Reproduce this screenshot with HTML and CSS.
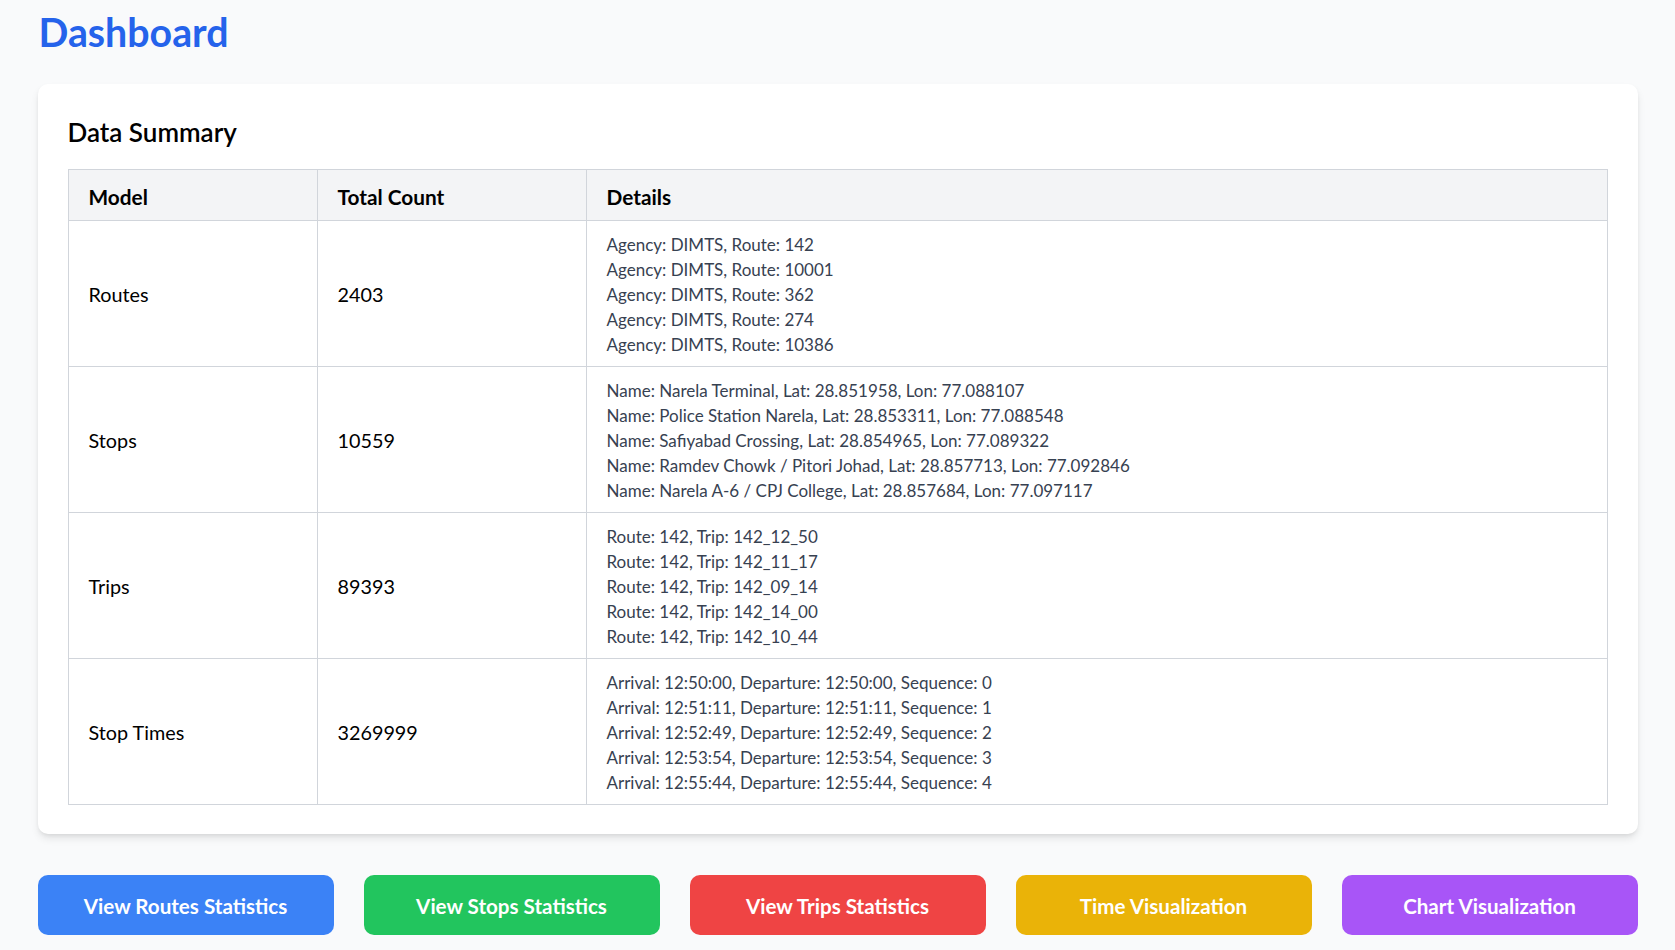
FILE: index.html
```html
<!DOCTYPE html>
<html lang="en">
<head>
<meta charset="utf-8">
<title>Dashboard</title>
<link rel="stylesheet" href="styles.css">
</head>
<body>
<div class="container">
  <h1 class="title">Dashboard</h1>

  <section class="card">
    <h2 class="card-title">Data Summary</h2>
    <table class="summary">
      <colgroup>
        <col class="col-model">
        <col class="col-count">
        <col>
      </colgroup>
      <thead>
        <tr><th>Model</th><th>Total Count</th><th>Details</th></tr>
      </thead>
      <tbody>
        <tr>
          <td>Routes</td>
          <td>2403</td>
          <td class="details">
            <div>Agency: DIMTS, Route: 142</div>
            <div>Agency: DIMTS, Route: 10001</div>
            <div>Agency: DIMTS, Route: 362</div>
            <div>Agency: DIMTS, Route: 274</div>
            <div>Agency: DIMTS, Route: 10386</div>
          </td>
        </tr>
        <tr>
          <td>Stops</td>
          <td>10559</td>
          <td class="details">
            <div>Name: Narela Terminal, Lat: 28.851958, Lon: 77.088107</div>
            <div>Name: Police Station Narela, Lat: 28.853311, Lon: 77.088548</div>
            <div>Name: Safiyabad Crossing, Lat: 28.854965, Lon: 77.089322</div>
            <div>Name: Ramdev Chowk / Pitori Johad, Lat: 28.857713, Lon: 77.092846</div>
            <div>Name: Narela A-6 / CPJ College, Lat: 28.857684, Lon: 77.097117</div>
          </td>
        </tr>
        <tr>
          <td>Trips</td>
          <td>89393</td>
          <td class="details">
            <div>Route: 142, Trip: 142_12_50</div>
            <div>Route: 142, Trip: 142_11_17</div>
            <div>Route: 142, Trip: 142_09_14</div>
            <div>Route: 142, Trip: 142_14_00</div>
            <div>Route: 142, Trip: 142_10_44</div>
          </td>
        </tr>
        <tr>
          <td>Stop Times</td>
          <td>3269999</td>
          <td class="details">
            <div>Arrival: 12:50:00, Departure: 12:50:00, Sequence: 0</div>
            <div>Arrival: 12:51:11, Departure: 12:51:11, Sequence: 1</div>
            <div>Arrival: 12:52:49, Departure: 12:52:49, Sequence: 2</div>
            <div>Arrival: 12:53:54, Departure: 12:53:54, Sequence: 3</div>
            <div>Arrival: 12:55:44, Departure: 12:55:44, Sequence: 4</div>
          </td>
        </tr>
      </tbody>
    </table>
  </section>

  <nav class="actions">
    <a class="btn btn-blue" href="#">View Routes Statistics</a>
    <a class="btn btn-green" href="#">View Stops Statistics</a>
    <a class="btn btn-red" href="#">View Trips Statistics</a>
    <a class="btn btn-yellow" href="#">Time Visualization</a>
    <a class="btn btn-purple" href="#">Chart Visualization</a>
  </nav>
</div>
</body>
</html>
```
FILE: styles.css
```css
html, body {
  margin: 0;
  padding: 0;
}

body {
  background: #f9fafb;
  font-family: Lato, "Open Sans", sans-serif;
  color: #111111;
  overflow: hidden;
}

.container {
  width: 1600px;
  margin: 0 auto;
  padding-top: 7px;
}

.title {
  margin: 0 0 27px 0;
  font-size: 39.3px;
  line-height: 50px;
  font-weight: 700;
  color: #2563eb;
  padding-left: 1px;
}

.card {
  background: #ffffff;
  border-radius: 10px;
  padding: 30px 30px 29px 30px;
  box-shadow: 0 5px 8px -1px rgba(0, 0, 0, 0.1), 0 2px 5px -2px rgba(0, 0, 0, 0.1);
}

.card-title {
  margin: 0 0 19px 0;
  padding-top: 1px;
  font-size: 26px;
  line-height: 35px;
  font-weight: 600;
  color: #000000;
}

.summary {
  width: 100%;
  border-collapse: collapse;
  table-layout: fixed;
  border: 1px solid #d1d5db;
}

.col-model { width: 249px; }
.col-count { width: 269px; }

.summary th {
  background: #f3f4f6;
  text-align: left;
  font-weight: 700;
  font-size: 20.8px;
  line-height: 30px;
  padding: 12px 20px 8px 20px;
  border: 1px solid #d1d5db;
  color: #000000;
}

.summary td {
  border: 1px solid #d1d5db;
  padding: 10px 20px;
  font-size: 19.8px;
  line-height: 30px;
  vertical-align: middle;
  color: #000000;
}

.summary td.details {
  font-size: 17px;
  line-height: 25px;
  color: #374151;
  padding-top: 11px;
  padding-bottom: 9px;
}

.actions {
  display: grid;
  grid-template-columns: repeat(5, 1fr);
  gap: 30px;
  margin-top: 41px;
}

.btn {
  display: block;
  text-align: center;
  text-decoration: none;
  color: #ffffff;
  font-weight: 700;
  font-size: 20.6px;
  line-height: 30px;
  padding: 16px 10px 14px 10px;
  border-radius: 10px;
}

.btn-blue { background: #3b82f6; }
.btn-green { background: #22c55e; }
.btn-red { background: #ef4444; }
.btn-yellow { background: #eab308; }
.btn-purple { background: #a855f7; }
```
